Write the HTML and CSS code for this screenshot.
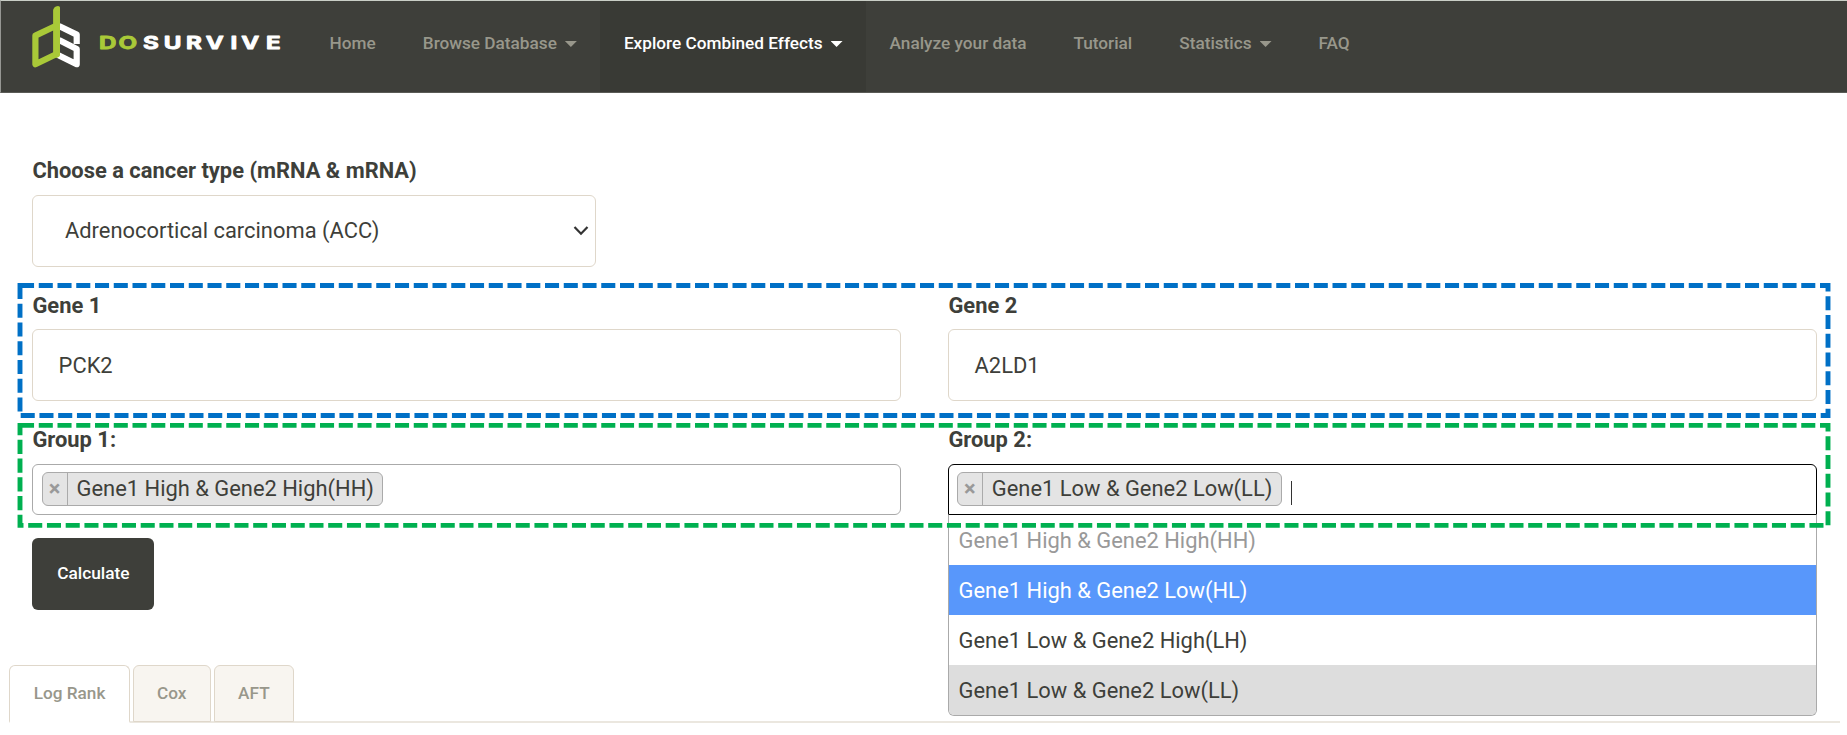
FILE: index.html
```
<!DOCTYPE html>
<html lang="en">
<head>
<meta charset="utf-8">
<title>DoSurvive</title>
<link rel="stylesheet" href="styles.css">
</head>
<body>
<header class="navbar">
  <a class="brand">
    <svg class="brand-mark" width="52" height="66" viewBox="0 0 52 66" fill="none" stroke-width="6.2" stroke-linejoin="round">
      <path class="mark-s" d="M27 20 L44.7 28.6 V38 M27 34 L44.7 43 V58.2 L26 49"/>
      <path class="mark-d" d="M24.6 3.5 V48 L3.4 58.2 V29.6 L24.6 19.5"/>
      <path class="mark-cap" d="M21.2 5 Q21.2 .6 26 0 Q28 0 28 1.5 V49 Q28 51 24 52 L21.2 50 Z"/>
    </svg>
    <svg class="brand-name" width="186" height="20" viewBox="0 0 186 20">
      <text transform="scale(1.42 1)" x="0 13.8 31 45.6 61.2 75.2 92.6 100.2 117.6" y="15.8"><tspan class="name-do">DO</tspan><tspan class="name-rest">SURVIVE</tspan></text>
    </svg>
  </a>
  <nav class="nav">
    <a>Home</a>
    <a>Browse Database<i class="caret"></i></a>
    <a class="active">Explore Combined Effects<i class="caret"></i></a>
    <a>Analyze your data</a>
    <a>Tutorial</a>
    <a>Statistics<i class="caret"></i></a>
    <a>FAQ</a>
  </nav>
</header>

<main class="form">
  <div class="field">
    <label>Choose a cancer type (mRNA &amp; mRNA)</label>
    <div class="control select">Adrenocortical carcinoma (ACC)
      <svg width="16" height="12" viewBox="0 0 16 12" fill="none" stroke="#333" stroke-width="2.2"><path d="M1.5 2 L8 8.7 L14.5 2"/></svg>
    </div>
  </div>
  <div class="row genes">
    <div class="field"><label>Gene 1</label><div class="control">PCK2</div></div>
    <div class="field"><label>Gene 2</label><div class="control">A2LD1</div></div>
  </div>
  <div class="row">
    <div class="field">
      <label>Group 1:</label>
      <div class="multi"><span class="chip"><b>×</b><span>Gene1 High &amp; Gene2 High(HH)</span></span></div>
    </div>
    <div class="field">
      <label>Group 2:</label>
      <div class="multi open"><span class="chip"><b>×</b><span>Gene1 Low &amp; Gene2 Low(LL)</span></span><i class="cursor"></i>
        <ul class="dropdown">
          <li class="disabled">Gene1 High &amp; Gene2 High(HH)</li>
          <li class="highlighted">Gene1 High &amp; Gene2 Low(HL)</li>
          <li>Gene1 Low &amp; Gene2 High(LH)</li>
          <li class="selected">Gene1 Low &amp; Gene2 Low(LL)</li>
        </ul>
      </div>
    </div>
  </div>
  <button class="calculate">Calculate</button>
</main>

<div class="tabs">
  <a class="tab current">Log Rank</a>
  <a class="tab">Cox</a>
  <a class="tab">AFT</a>
</div>

<svg class="outlines" width="1847" height="735" fill="none" stroke-width="4.9" stroke-dasharray="14.06 4.69">
  <rect x="20" y="285.5" width="1808" height="130" stroke="#0070c6"/>
  <rect x="20" y="425.4" width="1808" height="100" stroke="#00b050"/>
</svg>
</body>
</html>
```
FILE: styles.css
```
* { box-sizing: border-box; }
body {
  margin: 0;
  height: 735px;
  overflow: hidden;
  position: relative;
  background: #fff;
  color: #3e3f3a;
  font: 400 21.9px/32px Roboto, sans-serif;
}
.navbar {
  display: flex;
  height: 93px;
  background: #3e3f3a;
  border-top: 1px solid #c9cec6;
  border-left: 1px solid #969793;
  border-bottom: 1px solid #5a5b56;
}
.brand {
  display: flex;
  width: 305.1px;
  padding: 5px 0 0 31px;
}
.brand-mark { flex: none; }
.brand-name { margin: 27px 0 0 15px; overflow: visible; }
.brand-name text { font: 700 17px Inter, sans-serif; stroke-width: .8; stroke-linejoin: round; }
.mark-s { stroke: #fff; }
.mark-d { stroke: #a9c938; }
.mark-cap { fill: #a9c938; }
.name-do { fill: #a9c938; stroke: #a9c938; }
.name-rest { fill: #fff; stroke: #fff; }
.nav {
  display: flex;
  font-size: 17.22px;
  font-weight: 500;
  line-height: 84px;
}
.nav a {
  display: flex;
  padding: 0 23.5px;
  color: #98978b;
}
.nav .active { background: #393a35; color: #fff; }
.caret {
  margin: 40px 0 0 8px;
  width: 12px;
  height: 6px;
  background: currentColor;
  clip-path: polygon(0 0, 100% 0, 50% 100%);
}
.form { padding: 62px 30px 0 32.4px; }
.field { display: flex; flex-direction: column; gap: 8px; margin-bottom: 22px; }
.field label { height: 32px; font-weight: 700; }
.row { display: grid; grid-template-columns: 1fr 1fr; gap: 47.4px; }
.genes { margin-bottom: 23px; }
.genes .field { margin-bottom: 0; }
.genes label { line-height: 34px; }
.control {
  height: 72px;
  padding: 0 25.2px;
  border: 1px solid #dfd7ca;
  border-radius: 6px;
  line-height: 72px;
}
.select {
  display: flex;
  justify-content: space-between;
  align-items: center;
  width: 564px;
  padding: 0 6px 0 31.6px;
}
.multi {
  position: relative;
  display: flex;
  height: 51px;
  padding: 7px 8.2px;
  border: 1px solid #aaa;
  border-radius: 6px;
}
.open {
  padding-left: 7.4px;
  border-color: #000;
  border-radius: 6px 6px 0 0;
}
.chip {
  display: flex;
  height: 34px;
  border: 1px solid #aaa;
  border-radius: 6px;
  background: #e4e4e4;
  line-height: 32px;
}
.chip b {
  width: 25px;
  border-right: 1px solid #aaa;
  color: #999;
  text-align: center;
}
.chip span { padding: 0 8.6px 0 9px; }
.cursor { width: 1px; height: 24px; margin: 9px 0 0 8.6px; background: #333; }
.dropdown {
  position: absolute;
  z-index: 1;
  top: 49px;
  left: -1px;
  right: -1px;
  margin: 0;
  padding: 0;
  list-style: none;
  border: 1px solid #aaa;
  border-top-color: #000;
  border-radius: 0 0 6px 6px;
  background: #fff;
  overflow: hidden;
}
.dropdown li { height: 50px; padding-left: 9.2px; line-height: 51px; }
.dropdown .disabled { color: #999; }
.dropdown .highlighted { background: #5897fb; color: #fff; }
.dropdown .selected { background: #ddd; }
.calculate {
  display: block;
  width: 122px;
  height: 72px;
  margin-top: 1px;
  padding: 0 0 2px;
  border: 0;
  border-radius: 6px;
  background: #3e3f3a;
  color: #fff;
  font: 500 17.3px Roboto, sans-serif;
}
.tabs {
  display: flex;
  gap: 3px;
  height: 58px;
  margin: 55px 7px 0 9.4px;
  border-bottom: 2px solid #ebe7df;
}
.tab {
  height: 57px;
  padding: 0 23.3px;
  border: 1px solid #dfd7ca;
  border-radius: 6px 6px 0 0;
  background: #f8f5f0;
  color: #98978b;
  font-size: 17.2px;
  font-weight: 500;
  line-height: 55px;
}
.tab.current { height: 58px; background: #fff; border-bottom-color: #fff; border-bottom-width: 2px; }
.outlines { position: absolute; z-index: 2; top: 0; left: 0; pointer-events: none; }
```
